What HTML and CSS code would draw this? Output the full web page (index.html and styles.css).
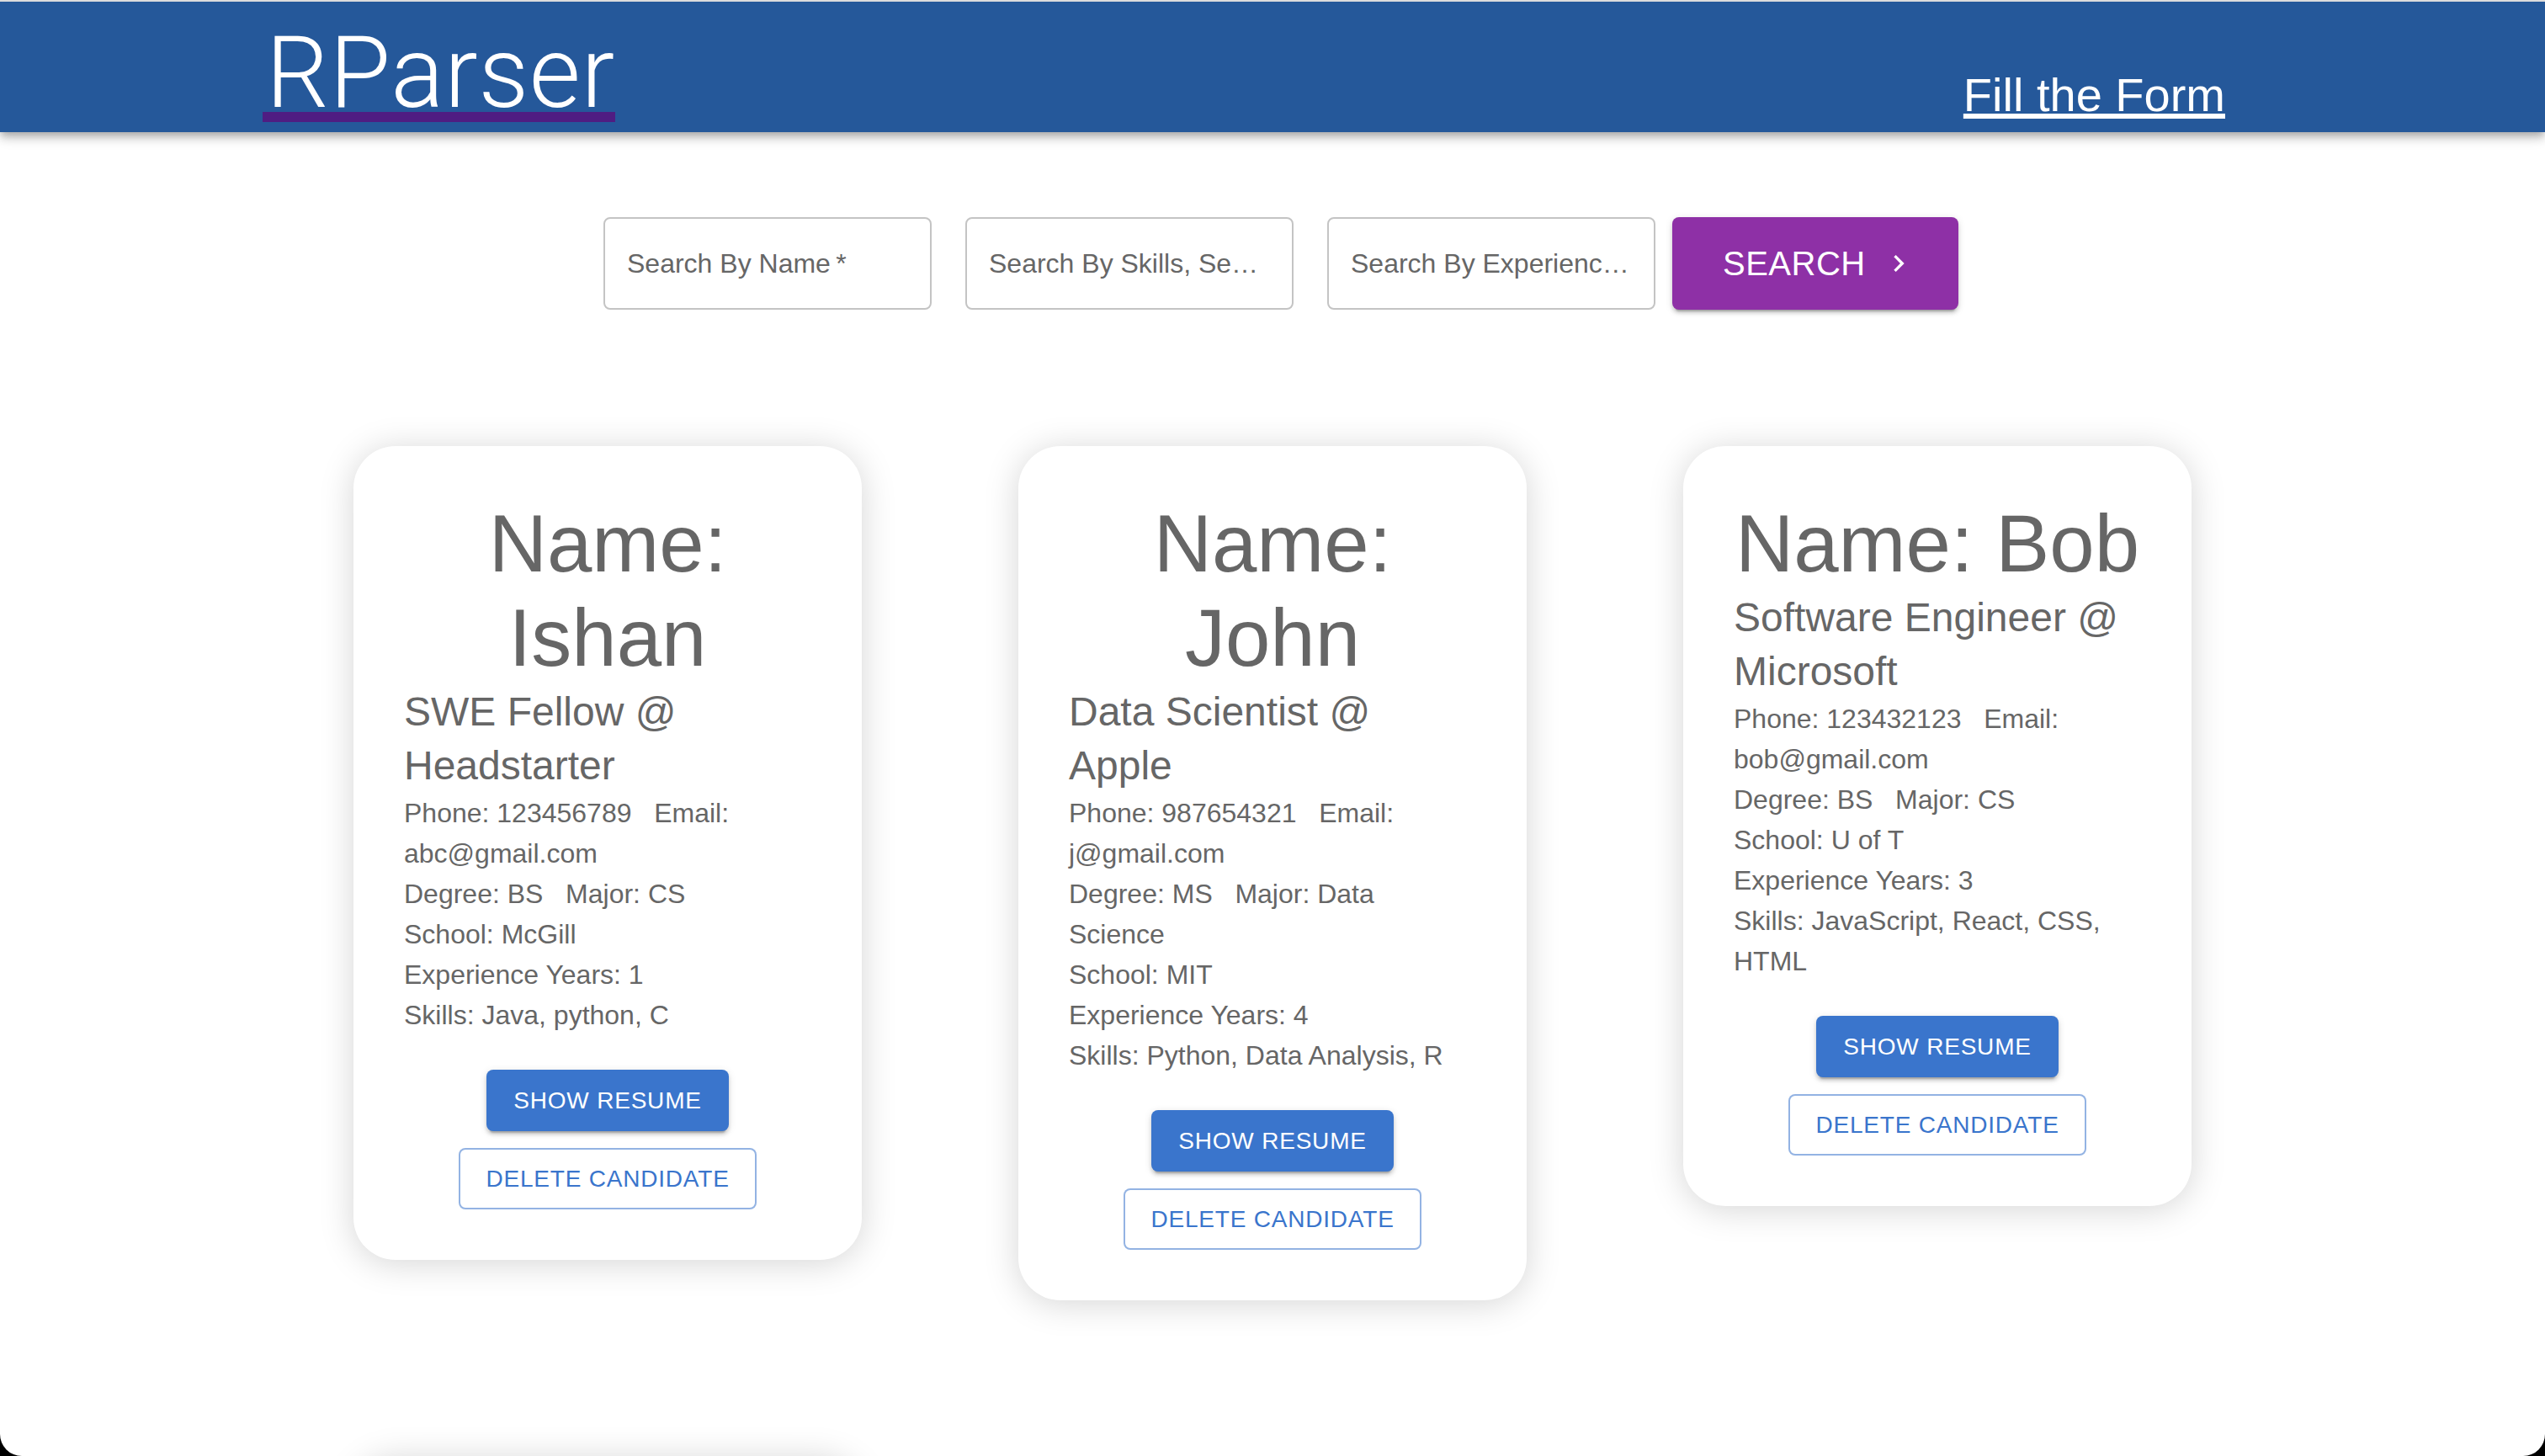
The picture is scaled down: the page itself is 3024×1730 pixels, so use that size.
FILE: index.html
```html
<!DOCTYPE html>
<html lang="en">
<head>
<meta charset="utf-8">
<title>RParser</title>
<link rel="stylesheet" href="styles.css">
</head>
<body>
<div class="window">
  <header class="appbar">
    <a class="logo" href="#">RParser</a>
    <a class="nav-link" href="#">Fill the Form</a>
  </header>
  <main>
    <form class="search-row">
      <div class="field"><span class="field-label">Search By Name&thinsp;*</span></div>
      <div class="field"><span class="field-label">Search By Skills, Se…</span></div>
      <div class="field"><span class="field-label">Search By Experienc…</span></div>
      <button type="button" class="btn-search">
        <span>SEARCH</span>
        <svg class="chevron" viewBox="0 0 24 24" width="40" height="40" aria-hidden="true"><path d="M10 6 8.59 7.41 13.17 12l-4.58 4.59L10 18l6-6z" fill="currentColor"/></svg>
      </button>
    </form>

    <section class="cards">
      <article class="card">
        <h3 class="card-name">Name: Ishan</h3>
        <h5 class="card-role">SWE Fellow @ Headstarter</h5>
        <p class="card-line">Phone: 123456789&nbsp;&nbsp; Email: abc@gmail.com</p>
        <p class="card-line">Degree: BS&nbsp;&nbsp; Major: CS</p>
        <p class="card-line">School: McGill</p>
        <p class="card-line">Experience Years: 1</p>
        <p class="card-line">Skills: Java, python, C</p>
        <div class="actions">
          <button type="button" class="btn btn-contained">Show Resume</button>
          <button type="button" class="btn btn-outlined">Delete Candidate</button>
        </div>
      </article>

      <article class="card">
        <h3 class="card-name">Name: John</h3>
        <h5 class="card-role">Data Scientist @ Apple</h5>
        <p class="card-line">Phone: 987654321&nbsp;&nbsp; Email: j@gmail.com</p>
        <p class="card-line">Degree: MS&nbsp;&nbsp; Major: Data Science</p>
        <p class="card-line">School: MIT</p>
        <p class="card-line">Experience Years: 4</p>
        <p class="card-line">Skills: Python, Data Analysis, R</p>
        <div class="actions">
          <button type="button" class="btn btn-contained">Show Resume</button>
          <button type="button" class="btn btn-outlined">Delete Candidate</button>
        </div>
      </article>

      <article class="card">
        <h3 class="card-name">Name: Bob</h3>
        <h5 class="card-role">Software Engineer @ Microsoft</h5>
        <p class="card-line">Phone: 123432123&nbsp;&nbsp; Email: bob@gmail.com</p>
        <p class="card-line">Degree: BS&nbsp;&nbsp; Major: CS</p>
        <p class="card-line">School: U of T</p>
        <p class="card-line">Experience Years: 3</p>
        <p class="card-line">Skills: JavaScript, React, CSS, HTML</p>
        <div class="actions">
          <button type="button" class="btn btn-contained">Show Resume</button>
          <button type="button" class="btn btn-outlined">Delete Candidate</button>
        </div>
      </article>

      <article class="card card-next" aria-hidden="true"></article>
    </section>
  </main>
</div>
</body>
</html>
```

FILE: styles.css
```css
html {
  background: #000;
}

body {
  margin: 0;
  font-family: "Liberation Sans", Arial, Helvetica, sans-serif;
}

.window {
  height: 1730px;
  box-sizing: border-box;
  overflow: hidden;
  background: #fff;
  border-top: 2px solid #dcdcdc;
  border-radius: 0 0 26px 26px;
}

/* ---------- App bar ---------- */
.appbar {
  position: relative;
  z-index: 1;
  height: 155px;
  box-sizing: border-box;
  background: #25589a;
  display: flex;
  justify-content: space-between;
  align-items: flex-end;
  padding: 0 380px 0 312px;
  box-shadow: 0 4px 8px -2px rgba(0, 0, 0, 0.2),
              0 8px 10px 0 rgba(0, 0, 0, 0.14),
              0 2px 20px 0 rgba(0, 0, 0, 0.12);
}

.logo {
  font-family: Roboto, "Liberation Sans", sans-serif;
  font-weight: 300;
  font-size: 118px;
  line-height: 92px;
  letter-spacing: 0.6px;
  color: #fff;
  text-decoration: none;
  border-bottom: 12px solid #4f1d82;
  margin-bottom: 12px;
  padding-left: 4px;
}

.nav-link {
  font-size: 56px;
  line-height: 57px;
  color: #fff;
  text-decoration: underline;
  text-decoration-thickness: 6px;
  text-underline-offset: 3px;
  margin-bottom: 16px;
}

/* ---------- Search row ---------- */
.search-row {
  display: flex;
  justify-content: center;
  margin: 101px 0 0;
}

.field {
  width: 390px;
  height: 110px;
  box-sizing: border-box;
  margin: 0 20px;
  border: 2px solid #c4c4c4;
  border-radius: 8px;
  padding: 0 26px;
  display: flex;
  align-items: center;
  font-size: 32px;
  color: #666;
  white-space: nowrap;
  overflow: hidden;
}

.btn-search {
  width: 340px;
  height: 110px;
  box-sizing: border-box;
  border: 0;
  border-radius: 8px;
  background: #8e30a6;
  color: #fff;
  font-family: inherit;
  font-size: 40px;
  letter-spacing: 0.5px;
  display: flex;
  align-items: center;
  gap: 19px;
  padding: 0 0 0 60px;
  box-shadow: 0 6px 2px -4px rgba(0, 0, 0, 0.2),
              0 4px 4px 0 rgba(0, 0, 0, 0.14),
              0 2px 10px 0 rgba(0, 0, 0, 0.12);
}

.chevron {
  display: block;
  flex: none;
}

/* ---------- Cards ---------- */
.cards {
  display: grid;
  grid-template-columns: repeat(3, 604px);
  column-gap: 186px;
  row-gap: 185px;
  justify-content: center;
  align-items: start;
  margin-top: 162px;
}

.card {
  background: #fff;
  border-radius: 50px;
  padding: 60px;
  color: #666;
  box-shadow: 0 4px 40px rgba(0, 0, 0, 0.17);
}

.card-next {
  height: 800px;
}

.card-name {
  margin: 0;
  font-size: 96px;
  line-height: 112px;
  font-weight: 400;
  text-align: center;
}

.card-role {
  margin: 0;
  font-size: 48px;
  line-height: 64px;
  font-weight: 400;
}

.card-line {
  margin: 0;
  font-size: 32px;
  line-height: 48px;
}

.actions {
  display: flex;
  flex-direction: column;
  align-items: center;
  gap: 20px;
  margin-top: 41px;
}

.btn {
  height: 73px;
  box-sizing: border-box;
  border-radius: 8px;
  font-family: inherit;
  font-size: 28px;
  letter-spacing: 0.8px;
  text-transform: uppercase;
}

.btn-contained {
  background: #3a75cc;
  color: #fff;
  border: 0;
  padding: 0 32px;
  box-shadow: 0 6px 2px -4px rgba(0, 0, 0, 0.2),
              0 4px 4px 0 rgba(0, 0, 0, 0.14),
              0 2px 10px 0 rgba(0, 0, 0, 0.12);
}

.btn-outlined {
  background: #fff;
  color: #3a75cc;
  border: 2px solid rgba(58, 117, 204, 0.55);
  padding: 0 30px;
}
```
